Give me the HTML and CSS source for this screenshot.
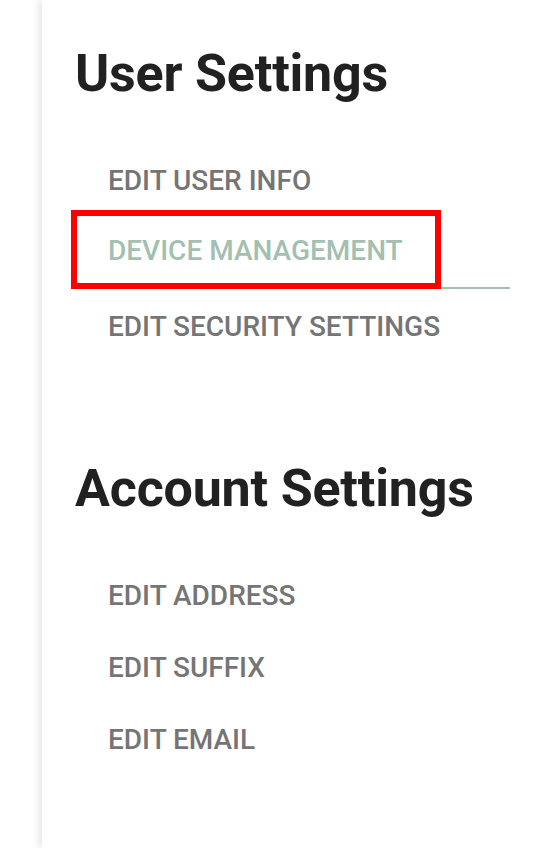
FILE: index.html
```html
<html>
<head>
<meta charset="utf-8">
<link rel="stylesheet" href="styles.css">
</head>
<body>

<div class="panel">

  <section class="settings">
    <h2 class="settings-title">User Settings</h2>
    <ul class="tabs">
      <li class="tab">Edit User Info</li>
      <li class="tab tab-active">
        Device Management
        <span class="highlight"></span>
      </li>
      <li class="tab">Edit Security Settings</li>
    </ul>
  </section>

  <section class="settings settings-account">
    <h2 class="settings-title">Account Settings</h2>
    <ul class="tabs">
      <li class="tab">Edit Address</li>
      <li class="tab">Edit Suffix</li>
      <li class="tab">Edit Email</li>
    </ul>
  </section>

</div>

</body>
</html>
```

FILE: styles.css
```css
body {
  margin: 0;
  background: #fff;
  font-family: Roboto, "Liberation Sans", sans-serif;
}

.panel {
  margin-left: 42px;
  min-height: 100vh;
  padding: 44px 40px 0 33px;
  box-shadow: -3px 0 8px rgba(0, 0, 0, 0.10);
  box-sizing: border-box;
}

.settings-title {
  margin: 0;
  font-size: 52px;
  line-height: 60px;
  font-weight: 700;
  letter-spacing: -0.2px;
  color: #212121;
}

.settings-account {
  margin-top: 96px;
}

.tabs {
  list-style: none;
  margin: 41px 0 0 0;
  padding: 0;
}

.tab {
  position: relative;
  height: 72px;
  line-height: 72px;
  padding-left: 33px;
  box-sizing: border-box;
  font-size: 28px;
  font-weight: 500;
  text-transform: uppercase;
  color: #757575;
}

.tab-active {
  line-height: 68px;
  color: #a3bfb0;
  border-bottom: 2px solid #a3bfb0;
}

.tab-active + .tab {
  margin-top: 2px;
}

.highlight {
  position: absolute;
  left: -4px;
  top: -7px;
  width: 370px;
  height: 79px;
  border: 6px solid #ff0000;
  box-sizing: border-box;
}
```
